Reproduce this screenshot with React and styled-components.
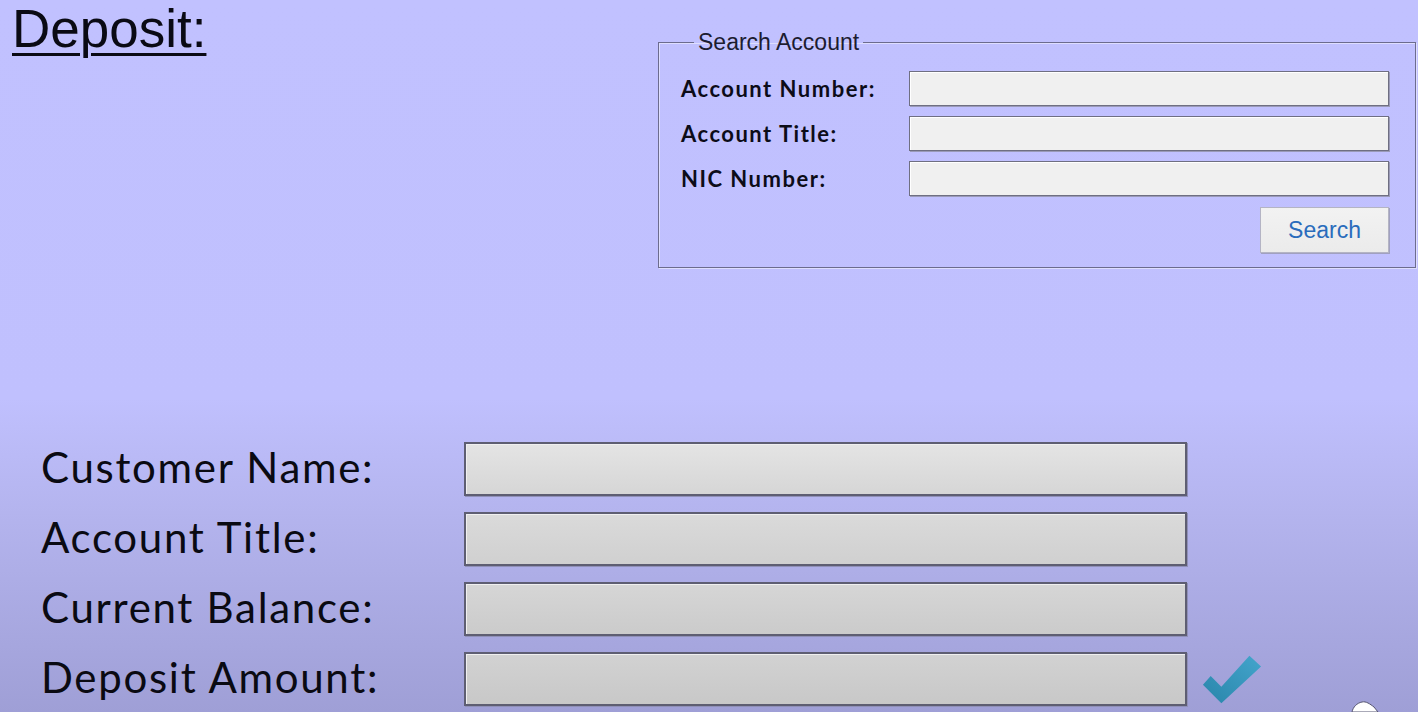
import React from "react";
import styled, { createGlobalStyle } from "styled-components";

const Global = createGlobalStyle`
  html, body { margin: 0; padding: 0; }
  body { background: #c0c0fe; }
  * { box-sizing: border-box; }
`;

const Page = styled.div`
  position: relative;
  width: 1418px;
  height: 712px;
  overflow: hidden;
  background: linear-gradient(to bottom, #c1c1ff 0%, #c0c0fe 56%, #b4b4ee 72%, #9f9fd6 100%);
  display: flex;
  flex-direction: column;
`;

const TopRow = styled.div`
  display: flex;
  align-items: flex-start;
  justify-content: space-between;
`;

const Title = styled.h1`
  margin: 0;
  padding-left: 12px;
  font-family: "Liberation Sans", Arial, sans-serif;
  font-weight: 400;
  font-size: 53px;
  line-height: 58px;
  color: #0a0a14;
  text-decoration: underline;
  text-decoration-thickness: 3px;
  text-underline-offset: 6px;
`;

const Fieldset = styled.fieldset`
  margin: 30px 2px 0 0;
  width: 758px;
  padding: 0 25px 14px 22px;
  border: 1px solid #6c6c8e;
  box-shadow: inset 1px 1px 0 #dedeff, 1px 1px 0 #dedeff;
  min-inline-size: 0;
`;

const Legend = styled.legend`
  margin-left: 13px;
  padding: 0 4px;
  font-family: "Liberation Sans", Arial, sans-serif;
  font-size: 23px;
  line-height: 24px;
  color: #1c1c30;
`;

const SearchGrid = styled.div`
  margin-top: 17px;
  display: grid;
  grid-template-columns: 228px 480px;
  grid-auto-rows: 35px;
  row-gap: 10px;
  align-items: center;
`;

const SmallLabel = styled.label`
  font-family: Lato, "Open Sans", sans-serif;
  font-weight: 700;
  font-size: 22px;
  letter-spacing: 1.5px;
  color: #0c0c18;
`;

const SmallInput = styled.div`
  height: 35px;
  background: #f0f0f0;
  border: 1px solid #6f6f82;
  box-shadow: inset 1px 1px 0 #ffffff, 1px 1px 0 #9a9ab8;
`;

const ButtonRow = styled.div`
  display: flex;
  justify-content: flex-end;
  margin-top: 11px;
`;

const SearchButton = styled.button`
  width: 129px;
  height: 46px;
  margin-right: 1px;
  background: linear-gradient(#f2f2f2, #ebebeb);
  border: 1px solid #b4b4c4;
  box-shadow: 1px 1px 0 #a0a0c0;
  font-family: "Liberation Sans", Arial, sans-serif;
  font-size: 23px;
  color: #2a6cbc;
  padding: 0;
`;

const Form = styled.div`
  margin-top: 174px;
  padding-left: 41px;
  display: grid;
  grid-template-columns: 423px 723px 76px;
  grid-auto-rows: 54px;
  row-gap: 16px;
  align-items: center;
`;

const BigLabel = styled.label`
  font-family: Lato, "Open Sans", sans-serif;
  font-weight: 400;
  font-size: 42px;
  letter-spacing: 1.7px;
  color: #0a0a12;
  margin-top: -4px;
`;

const BigInput = styled.div`
  height: 54px;
  background: linear-gradient(to bottom, ${p => p.$top} 0%, ${p => p.$bottom} 100%);
  border: 2px solid #5e5e72;
  box-shadow: inset 1px 1px 0 #f0f0f0, 1px 1px 0 #9090b8;
`;

const CheckCell = styled.div`
  display: flex;
  align-items: center;
  padding-left: 14px;
  height: 54px;
`;

const Cursor = styled.svg`
  position: absolute;
  left: 1350px;
  top: 699px;
`;

const Check = () => (
  <svg width="64" height="54" viewBox="0 0 64 54">
    <defs>
      <linearGradient id="ck" x1="0" y1="1" x2="1" y2="0">
        <stop offset="0" stopColor="#2985aa" />
        <stop offset="1" stopColor="#44a5cc" />
      </linearGradient>
    </defs>
    <path d="M2 33 L10 24 L21 35 L50 3 L62 14 L21 52 Z" fill="url(#ck)" />
  </svg>
);

const rows = [
  { label: "Customer Name:", top: "#e4e4e4", bottom: "#d6d6d6" },
  { label: "Account Title:", top: "#dadada", bottom: "#d0d0d0" },
  { label: "Current Balance:", top: "#d6d6d6", bottom: "#cbcbcb" },
  { label: "Deposit Amount:", top: "#d2d2d2", bottom: "#c8c8c8", check: true },
];

export default function App() {
  return (
    <Page>
      <Global />
      <TopRow>
        <Title>Deposit:</Title>
        <Fieldset>
          <Legend>Search Account</Legend>
          <SearchGrid>
            <SmallLabel>Account Number:</SmallLabel>
            <SmallInput />
            <SmallLabel>Account Title:</SmallLabel>
            <SmallInput />
            <SmallLabel>NIC Number:</SmallLabel>
            <SmallInput />
          </SearchGrid>
          <ButtonRow>
            <SearchButton>Search</SearchButton>
          </ButtonRow>
        </Fieldset>
      </TopRow>
      <Form>
        {rows.map(r => (
          <React.Fragment key={r.label}>
            <BigLabel>{r.label}</BigLabel>
            <BigInput $top={r.top} $bottom={r.bottom} />
            <CheckCell>{r.check ? <Check /> : null}</CheckCell>
          </React.Fragment>
        ))}
      </Form>
      <Cursor width="30" height="14" viewBox="0 0 30 14">
        <path d="M2 13 C3 8 7 4 12 3 C16 2 20 5 24 8 L28 13 Z" fill="#ffffff" stroke="#555570" strokeWidth="1" />
      </Cursor>
    </Page>
  );
}
